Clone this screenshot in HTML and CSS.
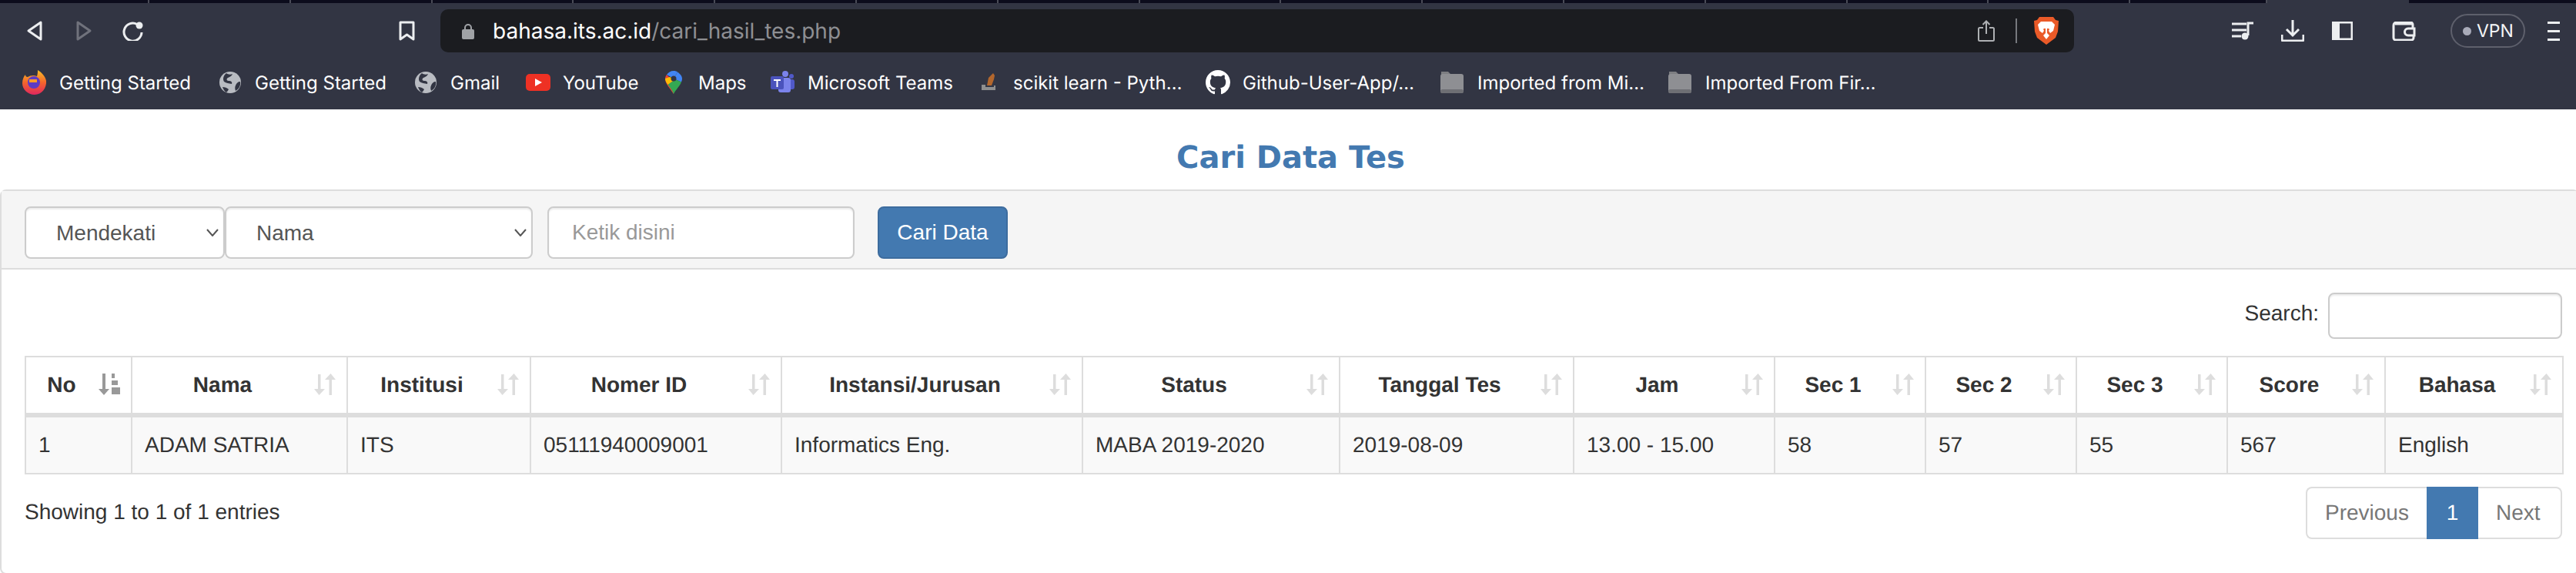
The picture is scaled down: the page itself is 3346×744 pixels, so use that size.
FILE: index.html
```html
<!DOCTYPE html>
<html lang="en">
<head>
    <meta charset="UTF-8">
    <title>Cari Data Tes</title>
    <link rel="stylesheet" href="styles.css">
</head>
<body>
<svg class="defs" width="0" height="0">
    <symbol id="sort" viewBox="0 0 28 28">
        <path d="M5 1h3.500v19H14l-7.500 8L0 20h5z"/>
        <path d="M19.500 28H23V8h5L21.500 0 14 8h5.500z"/>
    </symbol>
    <symbol id="sort-asc" viewBox="0 0 28 28">
        <path d="M5 0h4v20h5l-7 8-7-8h5z"/>
        <path d="M17 0h4v6h-4zM17 9h8v6h-8zM17 18h11v9H17z"/>
    </symbol>
    <symbol id="globe" viewBox="0 0 28 28">
        <circle cx="14" cy="14" r="14" fill="#b9bcc2"/>
        <path d="M9 2c2 2 6 2 8 1-1 3-4 4-6 5-2 1-2 4 1 4 3 0 5 1 4 4-4-1-7-1-10-3C4 10 5 5 9 2zM27 13c1 5-2 10-6 12-1-3-1-5 0-7 1-3 3-5 6-5zM4 20c3 0 6 1 8 3-1 2-2 3-3 4-2-1-4-4-5-7z" fill="#323543"/>
    </symbol>
    <symbol id="folder" viewBox="0 0 30 30">
        <path d="M1 1h9l3 3v3H1z" fill="#7d7e82"/>
        <rect x="0" y="4" width="30" height="25" rx="3" fill="#8e8f93"/>
        <rect x="0" y="24" width="30" height="5" rx="2.500" fill="#6e6f74"/>
    </symbol>
    <symbol id="chevron" viewBox="0 0 16 10">
        <path d="M1 1l7 8 7-8" fill="none" stroke="#555" stroke-width="2"/>
    </symbol>
</svg>

<div class="tabstrip">
    <div class="tab first"></div><div class="tab"></div><div class="tab"></div><div class="tab"></div>
    <div class="tab"></div><div class="tab"></div><div class="tab"></div><div class="tab"></div>
    <div class="tab"></div><div class="tab"></div><div class="tab"></div><div class="tab"></div>
    <div class="tab"></div><div class="tab"></div><div class="tab"></div>
    <div class="tab short"></div>
    <div class="tab active"></div>
</div>

<div class="toolbar">
    <svg class="nav-btn back" viewBox="0 0 20 26"><path d="M18 2v22L2 13z"/></svg>
    <svg class="nav-btn forward" viewBox="0 0 20 26"><path d="M2 2v22l16-11z"/></svg>
    <svg class="nav-btn reload" viewBox="0 0 28 26"><path d="M19 4.500A11.500 11.500 0 1 0 25 15"/><circle cx="22" cy="6" r="4.500" class="solid"/></svg>
    <svg class="nav-btn bookmark" viewBox="0 0 21 26"><path d="M2 2h17v22l-8.500-6L2 24z"/></svg>

    <div class="address">
        <svg class="lock" viewBox="0 0 16 21"><path d="M4 10V6a4 4 0 0 1 8 0v4" fill="none" stroke="#a0a2a6" stroke-width="2"/><rect y="8" width="16" height="13" rx="2" fill="#a0a2a6"/></svg>
        <span class="url"><span class="host">bahasa.its.ac.id</span>/cari_hasil_tes.php</span>
        <svg class="share" viewBox="0 0 22 28"><path d="M7 10H2.500A1.500 1.500 0 0 0 1 11.500V25.500A1.500 1.500 0 0 0 2.500 27h17a1.500 1.500 0 0 0 1.500-1.500V11.500A1.500 1.500 0 0 0 19.500 10H15M11 18V2M6.500 6L11 1.500 15.500 6"/></svg>
        <div class="addr-sep"></div>
        <svg class="brave" viewBox="0 0 32 36">
            <path d="M7 0h18l3 4 4 1-1 14-3 8-12 9-12-9-3-8L0 5l4-1z" fill="#ea5a28"/>
            <path d="M9 6h14l4 4-2 8-4 3-2-3 1-2-1-1h-2v6l3 3-4 5-4-5 3-3v-6h-2l-1 1 1 2-2 3-4-3-2-8z" fill="#fff"/>
        </svg>
    </div>

    <svg class="tool playlist" viewBox="0 0 32 24"><path d="M1 3h19M1 11h19M1 19h12M29 2h-7v16" /><circle cx="18" cy="19" r="4.500" class="solid"/></svg>
    <svg class="tool download" viewBox="0 0 30 28"><path d="M15 0v20M7 12l8 8 8-8M1 19v6a2 2 0 0 0 2 2h24a2 2 0 0 0 2-2v-6"/></svg>
    <svg class="tool sidebar" viewBox="0 0 27 24"><rect x="1" y="1" width="25" height="22" rx="1"/><rect x="0" y="0" width="10" height="24" class="solid"/></svg>
    <svg class="tool wallet" viewBox="0 0 31 25"><path d="M4 3h22M27 9V4a3 3 0 0 0-3-3H6a4 4 0 0 0-4 4v16a3 3 0 0 0 3 3h20a3 3 0 0 0 3-3v-3M29 9h-8a4.500 4.500 0 0 0 0 9h8z"/></svg>
    <div class="vpn"><span class="vpn-dot"></span>VPN</div>
    <svg class="tool menu" viewBox="0 0 18 25"><path d="M1 1.500h16M1 12.500h16M1 23.500h16"/></svg>
</div>

<div class="bookmarks">
    <a class="bm">
        <svg class="bm-icon" viewBox="0 0 32 32">
            <defs><linearGradient id="ff" x1="0" y1="0" x2="0" y2="1"><stop offset="0" stop-color="#fbbf26"/><stop offset=".5" stop-color="#f4662b"/><stop offset="1" stop-color="#e0265f"/></linearGradient></defs>
            <path d="M20 0c5 3 10 8 11 14 1 9-6 18-15 18S0 25 0 17C0 12 2 8 4 6c0 2 1 3 3 3 3-2 8-3 12-1 1-3 1-6 1-8z" fill="url(#ff)"/>
            <circle cx="15" cy="16" r="8" fill="#5c3bc4"/>
            <path d="M9 12h10v4H9z" fill="#f79b2a"/>
        </svg>
        Getting Started
    </a>
    <a class="bm"><svg class="bm-icon"><use href="#globe" width="28" height="28" x="2" y="2"/></svg>Getting Started</a>
    <a class="bm"><svg class="bm-icon"><use href="#globe" width="28" height="28" x="2" y="2"/></svg>Gmail</a>
    <a class="bm">
        <svg class="bm-icon" viewBox="0 0 32 32"><rect y="5" width="32" height="22" rx="5" fill="#ee3124"/><path d="M12 11l9 5-9 5z" fill="#fff"/></svg>
        YouTube
    </a>
    <a class="bm">
        <svg class="bm-icon" viewBox="0 0 32 32">
            <path d="M16 31C11 23 5 18 5 11c0-2 1-4 2-5l9 9z" fill="#ea4335"/>
            <path d="M7 6c2-3 5-5 9-5 2 0 4 .500 5 1.500L16 11z" fill="#4285f4"/>
            <path d="M21 2.500c3 2 6 5 6 8.500 0 2-.500 3-1 4.500L16 11z" fill="#4285f4"/>
            <path d="M5 11c0 3 2 6 3.500 8L18 12 11 9z" fill="#fbbc04"/>
            <path d="M8.500 19c3 4 6 7 7.500 12 3-6 8-10 10-15.500L18 12z" fill="#34a853"/>
            <circle cx="16" cy="11" r="3.500" fill="#323543"/>
        </svg>
        Maps
    </a>
    <a class="bm">
        <svg class="bm-icon" viewBox="0 0 32 32">
            <circle cx="19" cy="5" r="4" fill="#7b83eb"/><circle cx="27" cy="8" r="3" fill="#5059c9"/>
            <rect x="20" y="12" width="11" height="13" rx="3" fill="#5059c9"/>
            <rect x="10" y="10" width="16" height="19" rx="3" fill="#7b83eb"/>
            <rect x="0" y="8" width="17" height="17" rx="2" fill="#4b53bc"/>
            <path d="M4 12h9v2h-3.500v8h-2v-8H4z" fill="#fff"/>
        </svg>
        Microsoft Teams
    </a>
    <a class="bm">
        <svg class="bm-icon" viewBox="0 0 32 32">
            <path d="M14 20l2-10 6-6 2 3-1 5-3 8z" fill="#b3672d"/>
            <path d="M7 19h5v3h11v-2h2v6H7z" fill="#8f8f8f"/>
        </svg>
        scikit learn - Pyth…
    </a>
    <a class="bm">
        <svg class="bm-icon" viewBox="0 0 16 16"><path fill="#fff" d="M8 0C3.580 0 0 3.580 0 8c0 3.540 2.290 6.530 5.470 7.590.4.070.550-.170.550-.380 0-.190-.010-.820-.010-1.490-2.010.370-2.530-.490-2.690-.940-.090-.230-.480-.940-.820-1.130-.280-.150-.680-.520-.010-.530.630-.010 1.080.580 1.230.820.720 1.210 1.870.870 2.330.660.070-.520.280-.870.510-1.070-1.780-.200-3.640-.890-3.640-3.950 0-.870.310-1.590.820-2.150-.080-.200-.360-1.020.080-2.120 0 0 .670-.210 2.200.820.640-.180 1.320-.270 2-.270.680 0 1.360.090 2 .270 1.530-1.040 2.200-.820 2.200-.820.440 1.100.160 1.920.080 2.120.510.560.820 1.270.820 2.150 0 3.070-1.870 3.750-3.650 3.950.290.250.540.730.540 1.480 0 1.070-.010 1.930-.010 2.200 0 .210.150.460.550.380A8.013 8.013 0 0 0 16 8c0-4.420-3.580-8-8-8z"/></svg>
        Github-User-App/…
    </a>
    <a class="bm"><svg class="bm-icon"><use href="#folder" width="30" height="30" x="0" y="1"/></svg>Imported from Mi…</a>
    <a class="bm"><svg class="bm-icon"><use href="#folder" width="30" height="30" x="0" y="1"/></svg>Imported From Fir…</a>
</div>

<h3 class="page-title">Cari Data Tes</h3>

<div class="panel">
    <form class="panel-heading">
        <div class="select-wrap sel-mode">
            <select class="form-control"><option>Mendekati</option></select>
            <svg class="chevron"><use href="#chevron"/></svg>
        </div>
        <div class="select-wrap sel-field">
            <select class="form-control"><option>Nama</option></select>
            <svg class="chevron"><use href="#chevron"/></svg>
        </div>
        <input class="form-control search-key" type="text" placeholder="Ketik disini">
        <button class="btn-cari" type="button">Cari Data</button>
    </form>
    <div class="panel-body">
        <div class="table-top">
            <label class="search-label">Search:</label>
            <input class="form-control search-box" type="search">
        </div>
        <table class="data-table">
            <thead>
                <tr>
                    <th>No<svg class="sort-icon asc"><use href="#sort-asc"/></svg></th>
                    <th>Nama<svg class="sort-icon"><use href="#sort"/></svg></th>
                    <th>Institusi<svg class="sort-icon"><use href="#sort"/></svg></th>
                    <th>Nomer ID<svg class="sort-icon"><use href="#sort"/></svg></th>
                    <th>Instansi/Jurusan<svg class="sort-icon"><use href="#sort"/></svg></th>
                    <th>Status<svg class="sort-icon"><use href="#sort"/></svg></th>
                    <th>Tanggal Tes<svg class="sort-icon"><use href="#sort"/></svg></th>
                    <th>Jam<svg class="sort-icon"><use href="#sort"/></svg></th>
                    <th>Sec 1<svg class="sort-icon"><use href="#sort"/></svg></th>
                    <th>Sec 2<svg class="sort-icon"><use href="#sort"/></svg></th>
                    <th>Sec 3<svg class="sort-icon"><use href="#sort"/></svg></th>
                    <th>Score<svg class="sort-icon"><use href="#sort"/></svg></th>
                    <th>Bahasa<svg class="sort-icon"><use href="#sort"/></svg></th>
                </tr>
            </thead>
            <tbody>
                <tr>
                    <td>1</td>
                    <td>ADAM SATRIA</td>
                    <td>ITS</td>
                    <td>05111940009001</td>
                    <td>Informatics Eng.</td>
                    <td>MABA 2019-2020</td>
                    <td>2019-08-09</td>
                    <td>13.00 - 15.00</td>
                    <td>58</td>
                    <td>57</td>
                    <td>55</td>
                    <td>567</td>
                    <td>English</td>
                </tr>
            </tbody>
        </table>
        <div class="table-bottom">
            <div class="info">Showing 1 to 1 of 1 entries</div>
            <ul class="pagination">
                <li class="prev">Previous</li>
                <li class="current">1</li>
                <li class="next">Next</li>
            </ul>
        </div>
    </div>
</div>
</body>
</html>
```

FILE: styles.css
```css
* {
    box-sizing: border-box;
}

html, body {
    margin: 0;
    height: 100%;
    background-color: #fff;
}

body {
    display: flex;
    flex-direction: column;
    overflow: hidden;
    font-family: "Liberation Sans", Arial, sans-serif;
    font-size: 28px;
    color: #333;
    text-rendering: geometricPrecision;
}

.defs {
    position: absolute;
}

/* browser chrome */
.tabstrip {
    display: flex;
    flex: none;
    height: 4px;
    background-color: #0c0c1c;
}

.tab {
    flex: none;
    width: 183.8px;
    border-right: 2px solid #4a4b57;
}

.tab.first {
    width: 194px;
}

.tab.short {
    width: 178px;
}

.tab.active {
    width: 184px;
    border: 0;
    background-color: #323543;
}

.toolbar {
    display: flex;
    flex: none;
    align-items: center;
    height: 72px;
    background-color: #323543;
}

.nav-btn {
    flex: none;
    fill: none;
    stroke: #eceef0;
    stroke-width: 3;
    stroke-linejoin: round;
}

.nav-btn.back {
    width: 20px;
    height: 26px;
    margin-left: 35px;
}

.nav-btn.forward {
    width: 20px;
    height: 26px;
    margin-left: 44px;
    stroke: #70727c;
}

.nav-btn.reload {
    width: 28px;
    height: 26px;
    margin-left: 40px;
}

.nav-btn.bookmark {
    width: 21px;
    height: 26px;
    margin-left: 331px;
}

.solid {
    fill: #eceef0;
    stroke: none;
}

.address {
    display: flex;
    flex: none;
    align-items: center;
    width: 2122px;
    height: 56px;
    margin-left: 33px;
    padding-left: 28px;
    border-radius: 10px;
    background-color: #1b1c20;
}

.lock {
    flex: none;
    width: 16px;
    height: 21px;
}

.url {
    flex: none;
    width: 1929px;
    margin-left: 24px;
    font-family: Inter, sans-serif;
    font-size: 28px;
    color: #8e8f93;
}

.host {
    color: #fff;
}

.share {
    flex: none;
    width: 22px;
    height: 28px;
    fill: none;
    stroke: #aeb0b3;
    stroke-width: 2;
}

.addr-sep {
    flex: none;
    width: 2px;
    height: 32px;
    margin-left: 27px;
    background-color: #77797e;
}

.brave {
    flex: none;
    width: 32px;
    height: 36px;
    margin-left: 22px;
}

.tool {
    flex: none;
    fill: none;
    stroke: #eceef0;
    stroke-width: 3;
}

.playlist {
    width: 32px;
    height: 24px;
    margin-left: 204px;
}

.download {
    width: 30px;
    height: 28px;
    margin-left: 33px;
}

.sidebar {
    width: 27px;
    height: 24px;
    margin-left: 36px;
}

.wallet {
    width: 31px;
    height: 25px;
    margin-left: 51px;
}

.vpn {
    display: flex;
    flex: none;
    align-items: center;
    width: 97px;
    height: 44px;
    margin-left: 45px;
    padding-left: 14px;
    border: 2px solid #5e606c;
    border-radius: 22px;
    font-family: Inter, sans-serif;
    font-size: 23px;
    color: #f4f5f7;
}

.vpn-dot {
    flex: none;
    width: 11px;
    height: 11px;
    margin-right: 7px;
    border-radius: 50%;
    background-color: #a9abb9;
}

.menu {
    width: 18px;
    height: 25px;
    margin-left: 28px;
}

.bookmarks {
    display: grid;
    flex: none;
    grid-template-columns: 254px 254px 146px 176px 142px 267px 298px 305px 296px auto;
    justify-content: start;
    align-items: center;
    height: 66px;
    padding: 0 0 4px 29px;
    background-color: #323543;
    font-family: Inter, sans-serif;
    font-size: 24px;
    color: #fff;
}

.bm {
    display: flex;
    align-items: center;
    white-space: nowrap;
}

.bm-icon {
    flex: none;
    width: 32px;
    height: 32px;
    margin-right: 16px;
}

/* page */
.page-title {
    flex: none;
    height: 104px;
    margin: 0;
    padding: 40px 0 0 7px;
    font-family: "DejaVu Sans", Verdana, sans-serif;
    font-size: 40px;
    line-height: 46px;
    font-weight: bold;
    text-align: center;
    color: #4379b0;
}

.panel {
    flex: 1;
    margin: 0 -4px -2px 0;
    border: 2px solid #ddd;
    border-radius: 8px;
}

.panel-heading {
    display: flex;
    align-items: flex-start;
    height: 102px;
    padding: 20px 30px 0;
    border-bottom: 2px solid #ddd;
    background-color: #f5f5f5;
}

.form-control {
    height: 68px;
    border: 2px solid #ccc;
    border-radius: 8px;
    background-color: #fff;
    box-shadow: inset 0 2px 2px rgba(0, 0, 0, .075);
    font-family: "Liberation Sans", Arial, sans-serif;
    font-size: 28px;
    color: #555;
}

.form-control::placeholder {
    color: #999;
}

.select-wrap {
    position: relative;
    flex: none;
}

.select-wrap select {
    display: block;
    width: 100%;
    padding: 0 24px 0 39px;
    appearance: none;
}

.chevron {
    position: absolute;
    top: 29px;
    right: 8px;
    width: 16px;
    height: 10px;
}

.sel-mode {
    width: 260px;
}

.sel-field {
    width: 400px;
}

.search-key {
    width: 399px;
    margin-left: 19px;
    padding: 0 30px;
}

.btn-cari {
    width: 169px;
    height: 68px;
    margin-left: 30px;
    border: 2px solid #3d6c9e;
    border-radius: 8px;
    background-color: #4379b0;
    font-family: "Liberation Sans", Arial, sans-serif;
    font-size: 28px;
    color: #fff;
}

.panel-body {
    padding: 30px 20px 0 30px;
}

.table-top {
    display: flex;
    justify-content: flex-end;
    align-items: flex-start;
    height: 82px;
}

.search-label {
    margin-right: 12px;
    line-height: 54px;
}

.search-box {
    width: 304px;
    height: 60px;
}

.data-table {
    width: 3296px;
    table-layout: fixed;
    border-collapse: collapse;
    border: 2px solid #ddd;
}

.data-table th,
.data-table td {
    border: 2px solid #ddd;
}

.data-table th {
    position: relative;
    height: 76px;
    padding: 0 60px 0 16px;
    border-bottom-width: 6px;
    text-align: center;
    font-weight: bold;
}

.data-table td {
    height: 76px;
    padding: 0 16px;
    background-color: #f9f9f9;
    text-align: left;
}

.data-table th:nth-child(1) { width: 138px; }
.data-table th:nth-child(2) { width: 280px; }
.data-table th:nth-child(3) { width: 238px; }
.data-table th:nth-child(4) { width: 326px; }
.data-table th:nth-child(5) { width: 391px; }
.data-table th:nth-child(6) { width: 334px; }
.data-table th:nth-child(7) { width: 304px; }
.data-table th:nth-child(8) { width: 261px; }
.data-table th:nth-child(9) { width: 196px; }
.data-table th:nth-child(10) { width: 196px; }
.data-table th:nth-child(11) { width: 196px; }
.data-table th:nth-child(12) { width: 205px; }
.data-table th:nth-child(13) { width: 231px; }

.sort-icon {
    position: absolute;
    top: 21px;
    right: 14px;
    width: 28px;
    height: 28px;
    fill: #ddd;
}

.sort-icon.asc {
    fill: #999;
}

.table-bottom {
    display: flex;
    justify-content: space-between;
    align-items: flex-start;
    margin-top: 16px;
}

.info {
    padding-top: 16px;
    line-height: 34px;
}

.pagination {
    display: flex;
    height: 68px;
    margin: 0;
    padding: 0;
    list-style: none;
    line-height: 64px;
    color: #777;
}

.pagination li {
    border: 2px solid #ddd;
}

.prev {
    width: 157px;
    padding-left: 23px;
    border-right: 0 !important;
    border-radius: 8px 0 0 8px;
}

.pagination .current {
    width: 67px;
    border: 0;
    background-color: #4379b0;
    line-height: 68px;
    text-align: center;
    color: #fff;
}

.next {
    width: 109px;
    padding-left: 23px;
    border-left: 0 !important;
    border-radius: 0 8px 8px 0;
}
```
